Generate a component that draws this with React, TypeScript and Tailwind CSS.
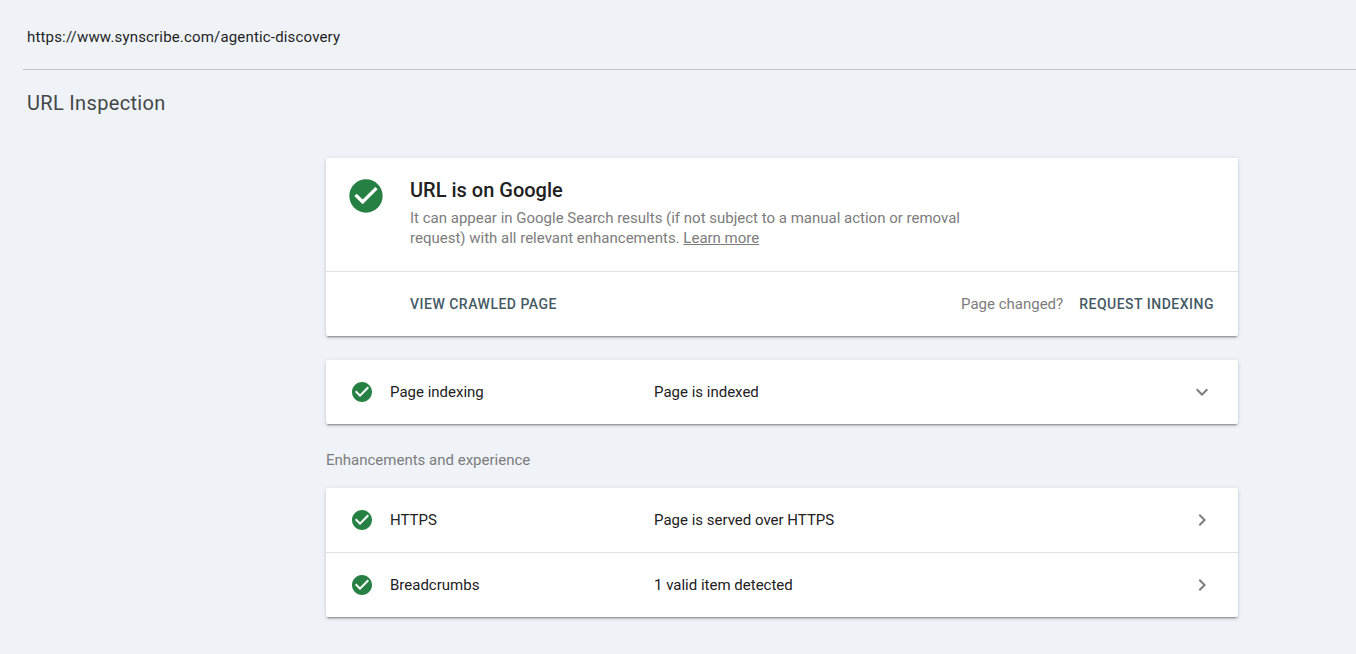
import type { ReactNode } from 'react';
import { MdCheckCircle, MdChevronRight, MdExpandMore } from 'react-icons/md';

interface RowProps {
  label: string;
  value: string;
  expandable?: boolean;
}

function Card({ children }: { children: ReactNode }) {
  return (
    <div className="rounded-xs bg-white shadow-[0_3px_1px_-2px_rgba(0,0,0,0.2),0_2px_2px_0_rgba(0,0,0,0.14),0_1px_5px_0_rgba(0,0,0,0.12)]">
      {children}
    </div>
  );
}

function StatusRow({ label, value, expandable = false }: RowProps) {
  return (
    <div className="flex h-16 items-center px-6 text-[15px] text-[#212121]">
      <MdCheckCircle className="mr-4 size-6 text-[#268044]" />
      <span className="w-66">{label}</span>
      <span className="flex-1">{value}</span>
      {expandable ? (
        <MdExpandMore className="size-6 text-[#7c7c7c]" />
      ) : (
        <MdChevronRight className="size-6 text-[#7c7c7c]" />
      )}
    </div>
  );
}

export default function App() {
  return (
    <div className="h-[654px] overflow-hidden bg-[#eff3f8] font-['Roboto',sans-serif]">
      {/* Inspected URL */}
      <header className="ml-[23px] flex h-[70px] items-center border-b border-[#c0c4c9] pt-1.5 pr-6 pl-1">
        <span className="text-[15px] tracking-[0.17px] text-[#1f1f1f]">
          https://www.synscribe.com/agentic-discovery
        </span>
      </header>

      <h1 className="mt-[19px] ml-[27px] text-xl leading-7 tracking-[0.33px] text-[#444746]">URL Inspection</h1>

      <main className="mt-[41px] ml-[326px] w-[912px]">
        {/* Verdict */}
        <Card>
          <div className="flex h-[114px] border-b border-[#e0e0e0] pt-[18px] pl-5">
            <MdCheckCircle className="mr-6 size-10 text-[#268044]" />
            <div>
              <h2 className="text-xl leading-7 font-medium text-[#212121]">URL is on Google</h2>
              <p className="mt-1 w-[570px] text-[15px] leading-5 text-[#7c7c7c]">
                It can appear in Google Search results (if not subject to a manual action or removal
                request) with all relevant enhancements.{' '}
                <a href="#" className="underline">Learn more</a>
              </p>
            </div>
          </div>
          <div className="flex h-16 items-center justify-between pr-6 pl-[84px] text-sm">
            <button className="font-medium tracking-[0.5px] text-[#455a64]">VIEW CRAWLED PAGE</button>
            <div className="flex items-center gap-4">
              <span className="text-[15px] leading-6 text-[#7c7c7c]">Page changed?</span>
              <button className="font-medium tracking-[0.5px] text-[#455a64]">REQUEST INDEXING</button>
            </div>
          </div>
        </Card>

        <div className="mt-6">
          <Card>
            <StatusRow label="Page indexing" value="Page is indexed" expandable />
          </Card>
        </div>

        {/* Enhancements */}
        <h3 className="flex h-16 items-center pt-2 text-[15px] text-[#7c7c7c]">
          Enhancements and experience
        </h3>
        <Card>
          <StatusRow label="HTTPS" value="Page is served over HTTPS" />
          <div className="border-t border-[#e0e0e0]">
            <StatusRow label="Breadcrumbs" value="1 valid item detected" />
          </div>
        </Card>
      </main>
    </div>
  );
}
